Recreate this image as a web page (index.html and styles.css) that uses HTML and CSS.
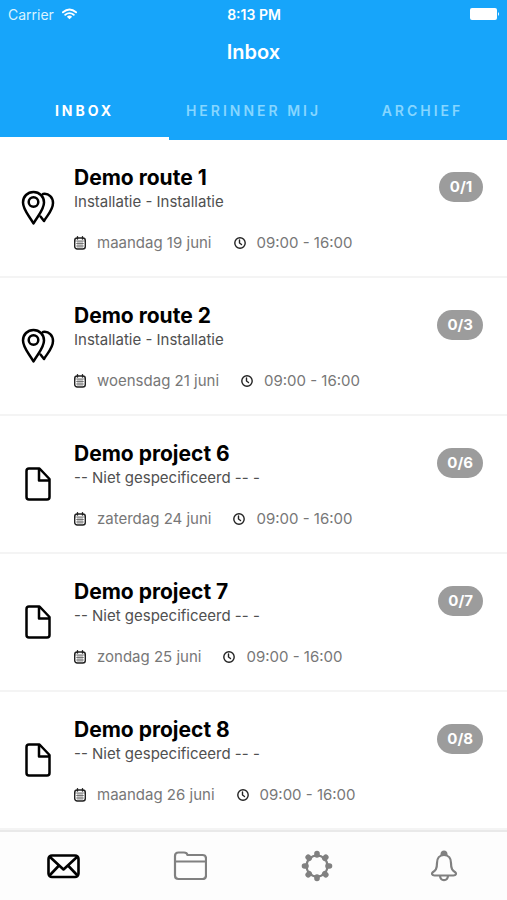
FILE: index.html
```html
<!DOCTYPE html>
<html lang="nl">
<head>
<meta charset="utf-8">
<meta name="viewport" content="width=device-width, initial-scale=1">
<title>Inbox</title>
<link rel="stylesheet" href="styles.css">
</head>
<body>
<svg class="defs" aria-hidden="true">
  <symbol id="pins" viewBox="0 0 34 36">
    <path d="M22 4C28 3 32 7.500 32 13C32 20 26.500 25 23 31L19.500 26.500"/>
    <path d="M12.500 2C6.500 2 2 6.500 2 12.500C2 20 8.500 26 12.500 33.500C16.500 26 23 20 23 12.500C23 6.500 18.500 2 12.500 2Z"/>
    <circle cx="12.500" cy="12" r="4.800"/>
  </symbol>
  <symbol id="file" viewBox="0 0 34 36">
    <path d="M8 2.500H18.500L28.500 13V31Q28.500 33.500 26 33.500H8Q5.500 33.500 5.500 31V5Q5.500 2.500 8 2.500ZM18 3V14.500H28"/>
  </symbol>
  <symbol id="calendar" viewBox="0 0 12 14">
    <rect x="0.700" y="2" width="10.600" height="11" rx="2.500"/>
    <path d="M3.500 0.800V3M8.500 0.800V3"/>
    <path class="thin" d="M1 5H11M2.500 7.500H9.500M2.500 10H9.500M4 5V12M6 5V12M8 5V12"/>
  </symbol>
  <symbol id="clock" viewBox="0 0 12 12">
    <circle cx="6" cy="6" r="5.200"/>
    <path d="M5.500 3V6L7.500 7.500"/>
  </symbol>
</svg>

<header class="header">
  <div class="status">
    <span class="carrier">Carrier
      <svg class="wifi" viewBox="0 0 16 12" aria-hidden="true"><path d="M1 4.200Q8-1.800 15 4.200M3.500 6.900Q8 3.200 12.500 6.900"/><path class="dot" d="M5.200 8.800Q8 6.600 10.800 8.800L8 11.600Z"/></svg>
    </span>
    <span class="time">8:13 PM</span>
    <svg class="battery" viewBox="0 0 30 12" aria-hidden="true"><rect width="27" height="12" rx="2"/><path d="M28 4Q30 6 28 8Z"/></svg>
  </div>
  <h1 class="heading">Inbox</h1>
  <nav class="tabs">
    <a class="tab active" href="#inbox">INBOX</a>
    <a class="tab" href="#herinner">HERINNER MIJ</a>
    <a class="tab" href="#archief">ARCHIEF</a>
  </nav>
</header>

<main class="list">
  <article class="row">
    <svg class="kind"><use href="#pins"/></svg>
    <div class="body">
      <h2 class="title">Demo route 1</h2>
      <p class="sub">Installatie - Installatie</p>
      <div class="meta"><svg class="cal"><use href="#calendar"/></svg><span class="date">maandag 19 juni</span><svg class="clk"><use href="#clock"/></svg><span>09:00 - 16:00</span></div>
    </div>
    <span class="badge">0/1</span>
  </article>
  <article class="row">
    <svg class="kind"><use href="#pins"/></svg>
    <div class="body">
      <h2 class="title">Demo route 2</h2>
      <p class="sub">Installatie - Installatie</p>
      <div class="meta"><svg class="cal"><use href="#calendar"/></svg><span class="date">woensdag 21 juni</span><svg class="clk"><use href="#clock"/></svg><span>09:00 - 16:00</span></div>
    </div>
    <span class="badge">0/3</span>
  </article>
  <article class="row">
    <svg class="kind"><use href="#file"/></svg>
    <div class="body">
      <h2 class="title">Demo project 6</h2>
      <p class="sub">-- Niet gespecificeerd -- -</p>
      <div class="meta"><svg class="cal"><use href="#calendar"/></svg><span class="date">zaterdag 24 juni</span><svg class="clk"><use href="#clock"/></svg><span>09:00 - 16:00</span></div>
    </div>
    <span class="badge">0/6</span>
  </article>
  <article class="row">
    <svg class="kind"><use href="#file"/></svg>
    <div class="body">
      <h2 class="title">Demo project 7</h2>
      <p class="sub">-- Niet gespecificeerd -- -</p>
      <div class="meta"><svg class="cal"><use href="#calendar"/></svg><span class="date">zondag 25 juni</span><svg class="clk"><use href="#clock"/></svg><span>09:00 - 16:00</span></div>
    </div>
    <span class="badge">0/7</span>
  </article>
  <article class="row">
    <svg class="kind"><use href="#file"/></svg>
    <div class="body">
      <h2 class="title">Demo project 8</h2>
      <p class="sub">-- Niet gespecificeerd -- -</p>
      <div class="meta"><svg class="cal"><use href="#calendar"/></svg><span class="date">maandag 26 juni</span><svg class="clk"><use href="#clock"/></svg><span>09:00 - 16:00</span></div>
    </div>
    <span class="badge">0/8</span>
  </article>
</main>

<nav class="bottom">
  <a class="item current" href="#inbox" aria-label="Inbox">
    <svg viewBox="0 0 34 34"><rect x="2.500" y="6.500" width="30" height="21.500" rx="3.500"/><path d="M4 8L17.500 20.500L31 8M4 26L13 16.500M31 26L22 16.500"/></svg>
  </a>
  <a class="item" href="#mappen" aria-label="Mappen">
    <svg viewBox="0 0 34 34"><path d="M2 7Q2 3.500 5.500 3.500H11Q14 3.500 14.500 6H29.500Q33 6 33 9.500V26.500Q33 30 29.500 30H5.500Q2 30 2 26.500ZM2 12.500H33"/></svg>
  </a>
  <a class="item" href="#instellingen" aria-label="Instellingen">
    <svg viewBox="0 0 34 34"><circle cx="17" cy="17" r="10.500"/><path class="teeth" d="M17 4.500V6M17 28V29.500M4.500 17H6M28 17H29.500M8.200 8.200L9.200 9.200M24.800 24.800L25.800 25.800M8.200 25.800L9.200 24.800M24.800 9.200L25.800 8.200"/></svg>
  </a>
  <a class="item" href="#meldingen" aria-label="Meldingen">
    <svg viewBox="0 0 34 34"><path d="M17 6C12.500 6 10 9.500 10 14C10 20 8.500 21.500 5.800 23.200C4.200 24.500 5 26.500 7.500 26.500H26.500C29 26.500 29.800 24.500 28.200 23.200C25.500 21.500 24 20 24 14C24 9.500 21.500 6 17 6ZM13 27C13.500 32.500 20.500 32.500 21 27"/><path class="fill" d="M13.500 7V5Q13.700 1.500 17 1.500Q20.300 1.500 20.500 5V7Z"/></svg>
  </a>
</nav>
</body>
</html>
```

FILE: styles.css
```css
* {
  box-sizing: border-box;
}

body {
  margin: 0;
  min-height: 100vh;
  display: flex;
  flex-direction: column;
  background: #fff;
  color: #000;
  font-family: Inter, "Liberation Sans", sans-serif;
}

svg {
  flex: none;
  fill: none;
  stroke: currentColor;
  stroke-linecap: round;
  stroke-linejoin: round;
}

.defs {
  position: absolute;
  width: 0;
  height: 0;
}

.thin {
  stroke-width: 0.5px;
}

.header {
  background: #17a5fa;
  color: #fff;
}

.status {
  display: grid;
  grid-template-columns: 1fr auto 1fr;
  align-items: center;
  height: 28px;
  padding: 0 7px 0 8px;
  font-size: 14px;
}

.carrier {
  display: flex;
  align-items: center;
  gap: 8px;
  color: #d9f3ff;
}

.wifi {
  width: 15px;
  height: 12px;
  color: #fff;
  stroke-width: 2px;
}

.dot {
  fill: currentColor;
  stroke: none;
}

.time {
  font-weight: 600;
}

.battery {
  justify-self: end;
  width: 30px;
  height: 12px;
  fill: #fff;
  stroke: none;
}

.heading {
  margin: 0;
  font-size: 20px;
  font-weight: 600;
  line-height: 48px;
  text-align: center;
}

.tabs {
  display: grid;
  grid-template-columns: repeat(3, 1fr);
  padding-top: 4px;
}

.tab {
  height: 60px;
  padding-top: 4px;
  border-bottom: 3px solid transparent;
  color: #86d6ff;
  font-size: 14px;
  font-weight: 600;
  letter-spacing: 3px;
  line-height: 53px;
  text-align: center;
  text-decoration: none;
  white-space: nowrap;
}

.tab.active {
  border-color: #fff;
  color: #fff;
  font-weight: 700;
}

.list {
  flex: 1;
}

.row {
  display: flex;
  align-items: flex-start;
  min-height: 138px;
  padding: 25px 24px 19px 21px;
  border-bottom: 2px solid #f4f4f4;
}

.kind {
  width: 34px;
  height: 36px;
  margin: 25px 19px 0 0;
  stroke-width: 2.5px;
}

.body {
  flex: 1;
}

.title {
  margin: 0;
  font-size: 21px;
  font-weight: 700;
  line-height: 26px;
}

.sub {
  margin: 0 0 18px;
  color: #505050;
  font-size: 15px;
  line-height: 22px;
}

.meta {
  display: flex;
  align-items: center;
  gap: 11px;
  color: #777;
  font-size: 15px;
  line-height: 24px;
}

.date {
  margin-right: 11px;
}

.cal,
.clk {
  width: 12px;
  height: 14px;
  color: #222;
  stroke-width: 1.4px;
}

.clk {
  height: 12px;
}

.badge {
  min-width: 44px;
  margin-top: 7px;
  padding: 0 10px;
  border-radius: 15px;
  background: #9c9c9c;
  color: #fff;
  font-size: 15px;
  font-weight: 700;
  line-height: 30px;
  text-align: center;
}

.bottom {
  display: grid;
  grid-template-columns: repeat(4, 1fr);
  height: 70px;
  border-top: 2px solid #e9e9e9;
  background: #fdfdfd;
}

.item {
  display: grid;
  place-items: center;
  color: #808080;
}

.item.current {
  color: #000;
}

.item svg {
  width: 34px;
  height: 34px;
  stroke-width: 2.2px;
}

.item.current svg {
  stroke-width: 2.6px;
}

.item .teeth {
  stroke-width: 5.6px;
}

.item .fill {
  fill: currentColor;
  stroke: none;
}
```
